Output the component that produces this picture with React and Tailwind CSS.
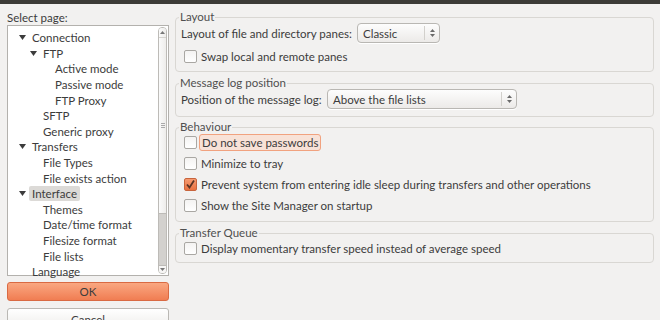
import React from 'react';

// tree rows: [label, level, expanded?, selected?]
const treeRows = [
    ['Connection', 0, true],
    ['FTP', 1, true],
    ['Active mode', 2],
    ['Passive mode', 2],
    ['FTP Proxy', 2],
    ['SFTP', 1],
    ['Generic proxy', 1],
    ['Transfers', 0, true],
    ['File Types', 1],
    ['File exists action', 1],
    ['Interface', 0, true, true],
    ['Themes', 1],
    ['Date/time format', 1],
    ['Filesize format', 1],
    ['File lists', 1],
    ['Language', 0],
];

const indent = ['pl-[24px]', 'pl-[35px]', 'pl-[47px]'];
const arrowPos = ['left-[11px]', 'left-[22px]', 'left-[34px]'];

const Triangle = ({ className }) => (
    <svg width="7" height="5" viewBox="0 0 7 5" className={className}>
        <path d="M0 0 L7 0 L3.5 5 Z" fill="#3c3c3c" />
    </svg>
);

const Checkbox = ({ checked }) => (
    checked ? (
        <div className="w-[13px] h-[13px] rounded-[2px] border border-[#c8643c] bg-gradient-to-b from-[#f59a70] to-[#e8713f] flex items-center justify-center shrink-0">
            <svg width="11" height="11" viewBox="0 0 11 11">
                <path d="M2 5.5 L4.5 8.5 L9 1.5" fill="none" stroke="#5a3324" strokeWidth="1.8" />
            </svg>
        </div>
    ) : (
        <div className="w-[13px] h-[13px] rounded-[2px] border border-[#a9a7a3] bg-gradient-to-b from-[#f4f3f2] to-[#ffffff] shrink-0" />
    )
);

const CheckRow = ({ label, checked, focused, h = 'h-[21px]' }) => (
    <div className={`flex items-center ${h} pl-[3px]`}>
        <Checkbox checked={checked} />
        {focused ? (
            <span className="ml-[2px] px-[2px] leading-[15px] rounded-[3px] border border-[#f1a27f] bg-[#f8e2d7]">{label}</span>
        ) : (
            <span className="ml-[4px]">{label}</span>
        )}
    </div>
);

const Select = ({ value, width }) => (
    <div className={`${width} h-[20px] rounded-[4px] border border-[#b9b7b3] bg-gradient-to-b from-[#fdfdfd] to-[#eceae8] flex items-center pl-[5px] shadow-[0_1px_0_#fff] shrink-0`}>
        <span className="flex-1">{value}</span>
        <div className="w-px h-[14px] bg-[#d2d0cc]" />
        <div className="w-[14px] flex flex-col items-center gap-[2px]">
            <svg width="5" height="3" viewBox="0 0 5 3"><path d="M0 3 L2.5 0 L5 3 Z" fill="#6a6a6a" /></svg>
            <svg width="5" height="3" viewBox="0 0 5 3"><path d="M0 0 L2.5 3 L5 0 Z" fill="#6a6a6a" /></svg>
        </div>
    </div>
);

const Group = ({ title, className, children }) => (
    <fieldset className={`border border-[#d9d7d3] rounded-[4px] px-0 ${className}`}>
        <legend className="ml-[3px] px-[1px] leading-[12px] text-[#4f4f4f]">{title}</legend>
        <div className="pl-[5px]">{children}</div>
    </fieldset>
);

export default function App() {
    return (
        <div className="w-[660px] h-[320px] overflow-hidden bg-[#f2f1f0] text-[#3c3c3c] text-[11.5px] leading-[15px] whitespace-nowrap flex flex-col" style={{ fontFamily: 'Lato, "Open Sans", sans-serif' }}>
            <div className="h-[4px] bg-[#3c3b37] shrink-0" />
            <div className="flex flex-1 min-h-0">
                {/* left: page tree */}
                <div className="w-[162px] ml-[7px] flex flex-col shrink-0">
                    <div className="h-[22px] pt-[6px]">Select page:</div>
                    <div className="h-[251px] border border-[#b3b1ad] bg-white flex">
                        <div className="flex-1 pt-[4px]">
                            {treeRows.map(([label, level, expanded, selected]) => (
                                <div key={label} className={`relative h-[15.6px] flex items-center ${indent[level]}`}>
                                    {expanded && <Triangle className={`absolute top-[5px] ${arrowPos[level]}`} />}
                                    {selected ? (
                                        <span className="-ml-[3px] px-[3px] bg-[#dcdad7] rounded-[2px]">{label}</span>
                                    ) : (
                                        <span>{label}</span>
                                    )}
                                </div>
                            ))}
                        </div>
                        {/* scrollbar */}
                        <div className="w-[9px] mr-px mt-px mb-px flex flex-col rounded-[4px] border border-[#bdbbb7] overflow-hidden">
                            <div className="h-[186px] bg-gradient-to-r from-[#fafafa] to-[#eeedeb] flex flex-col items-center border-b border-[#bdbbb7]">
                                <svg width="5" height="3" viewBox="0 0 5 3" className="mt-[3px]"><path d="M0 3 L2.5 0 L5 3 Z" fill="#777" /></svg>
                                <div className="w-full h-px bg-[#d5d3cf] mt-[3px]" />
                                <div className="flex-1 flex flex-col justify-center gap-[1px] items-center">
                                    <div className="w-[4px] h-px bg-[#aaa]" />
                                    <div className="w-[4px] h-px bg-[#aaa]" />
                                    <div className="w-[4px] h-px bg-[#aaa]" />
                                </div>
                            </div>
                            <div className="flex-1 bg-[#d3d1ce]" />
                            <div className="h-[8px] bg-[#f7f6f5] border-t border-[#bdbbb7] flex items-center justify-center">
                                <svg width="5" height="3" viewBox="0 0 5 3"><path d="M0 0 L2.5 3 L5 0 Z" fill="#777" /></svg>
                            </div>
                        </div>
                    </div>
                    <button className="mt-[6px] h-[19px] shrink-0 rounded-[3px] border border-[#d96a43] bg-gradient-to-b from-[#f9a781] to-[#f07d52] text-[#3c3c3c]">OK</button>
                    <button className="mt-[7px] h-[19px] shrink-0 rounded-[3px] border border-[#bab8b4] bg-gradient-to-b from-[#ffffff] to-[#f0efed] text-[#3c3c3c] pt-[3px]">Cancel</button>
                </div>

                {/* right: settings */}
                <div className="ml-[6px] w-[479px] flex flex-col">
                    <Group title="Layout" className="mt-[7px] h-[61px]">
                        <div className="flex items-center h-[20px]">
                            <span className="w-[176px]">Layout of file and directory panes:</span>
                            <Select value="Classic" width="w-[83px]" />
                        </div>
                        <CheckRow label="Swap local and remote panes" h="h-[20px] mt-[3px]" />
                    </Group>
                    <Group title="Message log position" className="mt-[5px] h-[40px]">
                        <div className="flex items-center h-[20px]">
                            <span className="w-[146px]">Position of the message log:</span>
                            <Select value="Above the file lists" width="w-[190px]" />
                        </div>
                    </Group>
                    <Group title="Behaviour" className="mt-[4px] h-[101px]">
                        <div className="-mt-px">
                            <CheckRow label="Do not save passwords" focused />
                            <CheckRow label="Minimize to tray" />
                            <CheckRow label="Prevent system from entering idle sleep during transfers and other operations" checked />
                            <CheckRow label="Show the Site Manager on startup" />
                        </div>
                    </Group>
                    <Group title="Transfer Queue" className="mt-[5px] h-[36px]">
                        <CheckRow label="Display momentary transfer speed instead of average speed" h="h-[18px]" />
                    </Group>
                </div>
            </div>
        </div>
    );
}
